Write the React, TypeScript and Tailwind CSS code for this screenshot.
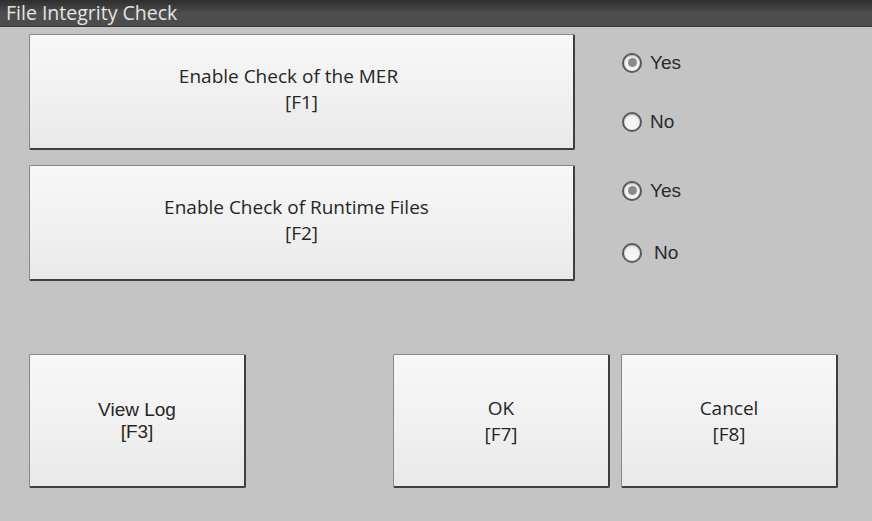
import React from "react";

function Radio({ checked, label, labelOffset = 0 }: { checked: boolean; label: string; labelOffset?: number }) {
  return (
    <div className="flex items-center h-[21px]">
      <div className="w-[20px] h-[20px] rounded-full border-[2px] border-[#5a5a5a] bg-[#f4f4f4] flex items-center justify-center shadow-[inset_0_1px_2px_rgba(0,0,0,0.25)]">
        {checked && <div className="w-[9px] h-[9px] rounded-full bg-[#8a8a8a]" />}
      </div>
      <span
        className="text-[19px] text-[#2a2a2a] leading-none"
        style={{ marginLeft: 8 + labelOffset, fontFamily: '"Liberation Sans", Arial, sans-serif' }}
      >
        {label}
      </span>
    </div>
  );
}

function Btn({
  className,
  line1,
  line2,
  font,
  leading,
  shift = 0,
}: {
  className: string;
  line1: string;
  line2: string;
  font: string;
  leading: string;
  shift?: number;
}) {
  return (
    <div
      className={
        "flex flex-col items-center justify-center rounded-[2px] border border-[#8a8a8a] border-r-[2px] border-b-[2px] border-r-[#3e3e3e] border-b-[#3e3e3e] bg-gradient-to-b from-[#f7f7f7] via-[#f1f1f1] to-[#e9e9e9] text-[#262626] text-[19px] " +
        leading +
        " " +
        className
      }
      style={{ fontFamily: font }}
    >
      <span style={{ marginRight: shift }}>{line1}</span>
      <span>{line2}</span>
    </div>
  );
}

export default function App() {
  const open = '"Open Sans", "Noto Sans", sans-serif';
  const lib = '"Liberation Sans", Arial, sans-serif';
  return (
    <div className="w-[872px] h-[521px] bg-[#c4c4c4] flex flex-col overflow-hidden">
      <div className="h-[27px] shrink-0 bg-gradient-to-b from-[#2e2e2e] via-[#4e4e4e] to-[#4c4c4c] border-b border-[#3a3a3a] flex items-center pl-[6px]">
        <span className="text-[19.5px] text-[#e4e4e4] leading-none" style={{ fontFamily: open }}>
          File Integrity Check
        </span>
      </div>

      <div className="flex flex-col pl-[29px] pt-[7px]">
        <div className="flex">
          <Btn
            className="w-[546px] h-[116px] pb-[6px]"
            line1="Enable Check of the MER"
            line2="[F1]"
            font={open}
            leading="leading-[26px]"
            shift={26}
          />
          <div className="flex flex-col pl-[47px] pt-[18px] gap-[38px]">
            <Radio checked label="Yes" />
            <Radio checked={false} label="No" />
          </div>
        </div>

        <div className="flex mt-[15px]">
          <Btn
            className="w-[546px] h-[116px] pb-[6px]"
            line1="Enable Check of Runtime Files"
            line2="[F2]"
            font={open}
            leading="leading-[26px]"
            shift={10}
          />
          <div className="flex flex-col pl-[47px] pt-[15px] gap-[41px]">
            <Radio checked label="Yes" />
            <Radio checked={false} label="No" labelOffset={4} />
          </div>
        </div>

        <div className="flex mt-[73px]">
          <Btn className="w-[217px] h-[134px]" line1="View Log" line2="[F3]" font={lib} leading="leading-[22px]" />
          <div className="w-[147px]" />
          <Btn className="w-[217px] h-[134px]" line1="OK" line2="[F7]" font={open} leading="leading-[26px]" />
          <div className="w-[11px]" />
          <Btn className="w-[217px] h-[134px]" line1="Cancel" line2="[F8]" font={open} leading="leading-[26px]" />
        </div>
      </div>
    </div>
  );
}
